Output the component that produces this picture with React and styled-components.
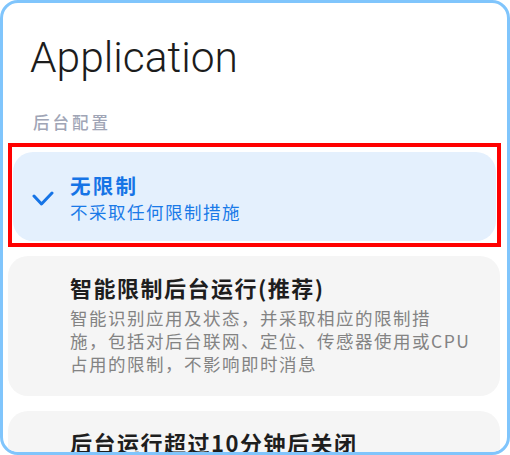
import React from "react";
import styled, { createGlobalStyle } from "styled-components";

const GlobalStyle = createGlobalStyle`
  html, body {
    margin: 0;
    padding: 0;
    background: #ffffff;
  }
  * {
    box-sizing: border-box;
  }
`;

const Frame = styled.div`
  width: 510px;
  height: 455px;
  border: 3px solid #80c5fc;
  border-radius: 18px;
  background: #ffffff;
  overflow: hidden;
  padding: 29px 7px 0 5px;
`;

const Title = styled.h1`
  margin: 0 0 0 22px;
  font-family: Roboto, "Liberation Sans", sans-serif;
  font-weight: 300;
  font-size: 42.5px;
  line-height: 52px;
  color: #1c1c1c;
`;

const SectionLabel = styled.div`
  margin: 28px 0 0 25px;
  font-family: "Noto Sans CJK SC", sans-serif;
  font-size: 16.5px;
  line-height: 20px;
  letter-spacing: 3px;
  font-weight: 500;
  color: #a0a5b6;
`;

const List = styled.div`
  display: flex;
  flex-direction: column;
  gap: 15px;
  margin-top: 20px;
`;

const Card = styled.div`
  position: relative;
  display: grid;
  grid-template-columns: ${(p) => (p.$selected ? "37px" : "42px")} 1fr;
  align-items: center;
  margin: ${(p) => (p.$selected ? "0 4px 0 5px" : "0")};
  padding: ${(p) => (p.$selected ? "19px 20px 16px 20px" : "16px 20px 21px 20px")};
  border-radius: 20px;
  background: ${(p) => (p.$selected ? "#e4f0fd" : "#f5f5f5")};

  ${(p) =>
    p.$highlight &&
    `
    &::after {
      content: "";
      position: absolute;
      top: -9px;
      left: -5px;
      right: -5px;
      bottom: -6px;
      border: 4px solid #ff0000;
      pointer-events: none;
    }
  `}
`;

const CheckSlot = styled.div`
  display: flex;
  align-items: center;
  height: 100%;
`;

const Texts = styled.div`
  display: flex;
  flex-direction: column;
  font-family: "Noto Sans CJK SC", sans-serif;
`;

const OptionTitle = styled.div`
  font-size: ${(p) => (p.$selected ? "20.5px" : "22px")};
  line-height: ${(p) => (p.$selected ? "28px" : "30px")};
  letter-spacing: ${(p) => (p.$selected ? "2.2px" : "1.5px")};
  font-weight: 600;
  color: ${(p) => (p.$selected ? "#1674e6" : "#1e1e1e")};
  white-space: nowrap;
`;

const OptionDesc = styled.div`
  margin-top: ${(p) => (p.$selected ? "0" : "4px")};
  font-size: 17.5px;
  line-height: ${(p) => (p.$selected ? "26px" : "23px")};
  letter-spacing: 1.5px;
  color: ${(p) => (p.$selected ? "#1a7ae8" : "#838383")};
`;

const DescLine = styled.span`
  display: block;
  white-space: nowrap;
`;

const Check = () => (
  <svg width="22" height="16" viewBox="0 0 22 16" style={{ marginLeft: -1, marginTop: 2 }}>
    <polyline
      points="2,5 9.5,13 20,2"
      fill="none"
      stroke="#1674e6"
      strokeWidth="3"
      strokeLinecap="round"
      strokeLinejoin="round"
    />
  </svg>
);

const options = [
  {
    title: "无限制",
    desc: ["不采取任何限制措施"],
    selected: true,
  },
  {
    title: "智能限制后台运行(推荐)",
    desc: [
      "智能识别应用及状态，并采取相应的限制措",
      "施，包括对后台联网、定位、传感器使用或CPU",
      "占用的限制，不影响即时消息",
    ],
  },
  {
    title: "后台运行超过10分钟后关闭",
    desc: ["后台运行超过10分钟后关闭应用，降低耗电"],
  },
];

export default function App() {
  return (
    <>
      <GlobalStyle />
      <Frame>
        <Title>Application</Title>
        <SectionLabel>后台配置</SectionLabel>
        <List>
          {options.map((o) => (
            <Card key={o.title} $selected={o.selected} $highlight={o.selected}>
              <CheckSlot>{o.selected && <Check />}</CheckSlot>
              <Texts>
                <OptionTitle $selected={o.selected}>{o.title}</OptionTitle>
                <OptionDesc $selected={o.selected}>
                  {o.desc.map((line) => (
                    <DescLine key={line}>{line}</DescLine>
                  ))}
                </OptionDesc>
              </Texts>
            </Card>
          ))}
        </List>
      </Frame>
    </>
  );
}
